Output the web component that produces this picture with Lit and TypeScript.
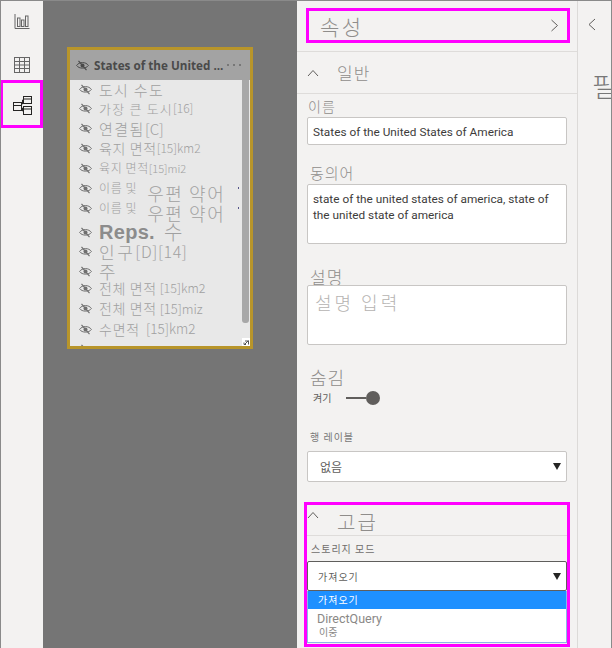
import { LitElement, html, css } from 'lit';
import { customElement } from 'lit/decorators.js';
import { styleMap } from 'lit/directives/style-map.js';

const eyeOff = html`<svg class="eye" viewBox="0 0 13 11" width="13" height="11" fill="none" stroke="currentColor">
  <path d="M.6 5.5 C3 1.6 10 1.6 12.4 5.5 C10 9 3 9 .6 5.5Z" stroke-width="1"/>
  <circle cx="6.5" cy="5.5" r="2" fill="currentColor" stroke="none"/>
  <path d="M2.5 .8 L10.5 10.2" stroke-width="1.2"/>
</svg>`;

type Field = {
  name: string;
  tail?: string;
  size: number;
  tailSize?: number;
  ls?: number;
  tailLs?: number;
  tailGap?: number;
  tailDrop?: number;
  dy?: number;
  bold?: boolean;
  dot?: boolean;
};

// row pitch in the list is uneven, dy is the offset from the plain 20px pitch
const fields: Field[] = [
  { name: '도시 수도', size: 15, ls: 1.3, dy: -1 },
  { name: '가장 큰 도시', tail: '[16]', size: 13, tailSize: 12, ls: 1.2, dy: -1 },
  { name: '연결됨', tail: '[C]', size: 15, tailSize: 15, ls: 1.5 },
  { name: '육지 면적', tail: '[15]km2', size: 14, tailSize: 12, ls: 0.6 },
  { name: '육지 면적', tail: '[15]mi2', size: 12, tailSize: 11, ls: 0.6 },
  { name: '이름 및', tail: '우편 약어', size: 12, tailSize: 18, ls: 0.6, tailLs: 1.6, tailGap: 10, tailDrop: 10, dot: true },
  { name: '이름 및', tail: '우편 약어', size: 12, tailSize: 18, ls: 0.6, tailLs: 1.6, tailGap: 10, tailDrop: 10, dot: true },
  { name: 'Reps.', tail: '수', size: 20, tailSize: 20, ls: 0.3, tailGap: 9, dy: 4, bold: true },
  { name: '인구', tail: '[D][14]', size: 17, tailSize: 16, ls: 2.5, tailLs: 0.6, dy: -1 },
  { name: '주', size: 18 },
  { name: '전체 면적', tail: '[15]km2', size: 14, tailSize: 12.5, ls: 0.6, tailGap: 3, dy: -3 },
  { name: '전체 면적', tail: '[15]miz', size: 14, tailSize: 13, ls: 0.6, tailGap: 3 },
  { name: '수면적', tail: '[15]km2', size: 14, tailSize: 13.5, ls: 0.8, tailGap: 6, dy: 1 },
  { name: '', size: 14 },
];

@customElement('app-root')
export class AppRoot extends LitElement {
  static styles = css`
    :host {
      display: block;
      width: 612px;
      height: 648px;
      font-family: 'Noto Sans CJK KR', 'Liberation Sans', sans-serif;
      font-weight: 300;
      color: #8f8d8b;
      overflow: hidden;
    }
    .app {
      display: flex;
      height: 648px;
      box-sizing: border-box;
      border-top: 1px solid #8a8a8a;
      border-left: 1px solid #8a8a8a;
      border-right: 1px solid #8a8a8a;
      background: #f3f2f1;
    }
    .rail {
      width: 42px;
      flex: none;
      display: flex;
      flex-direction: column;
    }
    .rail-item {
      display: flex;
      align-items: center;
      justify-content: center;
      box-sizing: border-box;
      color: #666;
    }
    .rail-item.chart {
      height: 42px;
    }
    .rail-item.table {
      height: 37px;
      padding-top: 7px;
    }
    .rail-item.active {
      height: 48px;
      border: 3px solid #ff00ff;
      border-left-width: 2px;
      padding: 3px 0 0 1px;
      color: #252423;
    }
    .canvas {
      width: 254px;
      flex: none;
      box-sizing: border-box;
      background: #757575;
      padding: 46px 0 0 24px;
    }
    .card {
      width: 186px;
      height: 302px;
      box-sizing: border-box;
      border: 3px solid #b8952a;
      background: #e8e8e8;
      display: flex;
      flex-direction: column;
      position: relative;
    }
    .card-head {
      height: 30px;
      flex: none;
      box-sizing: border-box;
      background: #a3a3a3;
      display: flex;
      align-items: center;
      padding: 0 9px 0 6px;
      gap: 5px;
      color: #4a4a4a;
      font: bold 11.7px 'Open Sans', 'Liberation Sans', sans-serif;
      white-space: nowrap;
    }
    .card-head .title {
      flex: 1;
      min-width: 0;
    }
    .dots {
      display: flex;
      gap: 4px;
    }
    .dots i {
      width: 2px;
      height: 2px;
      background: #777;
    }
    .card-body {
      flex: 1;
      display: flex;
      min-height: 0;
    }
    .list {
      flex: 1;
      min-width: 0;
      padding-left: 9px;
      overflow: hidden;
      color: #9c9c9c;
    }
    .row {
      height: 20px;
      display: flex;
      align-items: center;
      white-space: nowrap;
      line-height: 1;
      color: #a0a0a0;
    }
    .row .eye {
      flex: none;
      margin-right: 7px;
      color: #6f6f6f;
    }
    .row .bold {
      font-weight: 700;
      font-family: 'Liberation Sans', sans-serif;
      color: #8c8c8c;
    }
    .row .dot {
      width: 1px;
      height: 2px;
      margin-left: 13px;
      background: #55558a;
    }
    .scroll {
      width: 7px;
      flex: none;
      margin-right: 1px;
      background: #a8a8a8;
      height: 243px;
      border-radius: 0 0 3px 3px;
    }
    .grip {
      position: absolute;
      right: 0;
      bottom: 0;
      width: 8px;
      height: 8px;
      background: #fff;
      color: #555;
    }
    .pane {
      width: 281px;
      flex: none;
      box-sizing: border-box;
      border-right: 1px solid #dcdad8;
      display: flex;
      flex-direction: column;
    }
    .pane-head {
      height: 51px;
      flex: none;
      box-sizing: border-box;
      padding-top: 7px;
      border-bottom: 1px solid #dedcda;
    }
    .hl {
      margin-left: 9px;
      width: 264px;
      height: 35px;
      box-sizing: border-box;
      border: 3px solid #ff00ff;
      display: flex;
      align-items: center;
      justify-content: space-between;
      padding: 0 8px 0 11px;
      font-size: 21px;
      letter-spacing: 2.5px;
    }
    .section {
      height: 42px;
      flex: none;
      box-sizing: border-box;
      border-bottom: 1px solid #dedcda;
      display: flex;
      align-items: center;
      gap: 18px;
      padding-left: 10px;
      font-size: 17px;
      letter-spacing: 1px;
    }
    .body {
      padding: 0 10px;
      display: flex;
      flex-direction: column;
    }
    .label {
      line-height: 1;
      padding-left: 3px;
    }
    .box {
      background: #fff;
      border: 1px solid #c8c6c4;
      border-radius: 2px;
      box-sizing: border-box;
      color: #3d3c3b;
      font: 400 11.8px/16px Roboto, 'Liberation Sans', sans-serif;
    }
    .name-label { font-size: 14px; margin-top: 5px; padding-left: 1px; letter-spacing: 1px; }
    .name-box { height: 28px; margin-top: 4px; padding: 6px 5px; }
    .syn-label { font-size: 15px; margin-top: 20px; letter-spacing: 1px; }
    .syn-box { height: 60px; margin-top: 4px; padding: 6px 5px; }
    .desc-label { font-size: 17px; margin-top: 24px; letter-spacing: 1px; }
    .desc-box { height: 60px; padding: 5px 7px; font: 300 18px/22px 'Noto Sans CJK KR', sans-serif; color: #b5b3b1; letter-spacing: 3px; }
    .hide-label { font-size: 18px; margin-top: 23px; letter-spacing: 1px; }
    .toggle {
      display: flex;
      align-items: center;
      gap: 15px;
      margin-top: 4px;
      margin-left: 6px;
      font-size: 10px;
      font-weight: 400;
      color: #605e5c;
    }
    .switch {
      display: flex;
      align-items: center;
    }
    .track {
      width: 20px;
      height: 2px;
      background: #605e5c;
    }
    .knob {
      width: 14px;
      height: 14px;
      border-radius: 50%;
      background: #605e5c;
    }
    .row-label { font-size: 10px; margin-top: 27px; color: #777; font-weight: 400; letter-spacing: 1px; }
    .select {
      height: 31px;
      margin-top: 9px;
      display: flex;
      align-items: center;
      justify-content: space-between;
      padding: 0 5px 0 12px;
      font: 400 12px 'Noto Sans CJK KR', sans-serif;
      color: #605e5c;
    }
    .caret {
      width: 0;
      height: 0;
      border-left: 4px solid transparent;
      border-right: 4px solid transparent;
      border-top: 7px solid #252423;
    }
    .advanced {
      margin: 20px 0 1px 7px;
      width: 266px;
      flex: 1;
      box-sizing: border-box;
      border: 3px solid #ff00ff;
      display: flex;
      flex-direction: column;
      position: relative;
    }
    .adv-head {
      height: 31px;
      flex: none;
      box-sizing: border-box;
      border-bottom: 1px solid #dedcda;
      display: flex;
      align-items: center;
      gap: 18px;
      font-size: 20px;
      letter-spacing: 2px;
      padding-top: 2px;
      position: relative;
    }
    .adv-head svg {
      margin-top: -12px;
    }
    .adv-head::after {
      content: '';
      position: absolute;
      left: -10px;
      right: -10px;
      bottom: -1px;
      height: 1px;
      background: #dedcda;
      z-index: -1;
    }
    .storage { font-size: 10px; font-weight: 400; margin: 8px 0 0 4px; color: #6f6d6b; letter-spacing: 1px; line-height: 1; }
    .open-select {
      margin-top: 7px;
      height: 30px;
      background: #fff;
      border: 1px solid #605e5c;
      border-radius: 2px;
      box-sizing: border-box;
      display: flex;
      align-items: center;
      justify-content: space-between;
      padding: 0 5px 0 10px;
      font-size: 10px;
      font-weight: 400;
      color: #605e5c;
      letter-spacing: 1px;
    }
    .options {
      background: #fff;
      border: 1px solid #8ab8e6;
      border-top: none;
      font-size: 10px;
      font-weight: 400;
    }
    .opt-on {
      background: #1e90ff;
      color: #fff;
      height: 18px;
      line-height: 18px;
      padding-left: 10px;
      letter-spacing: 1px;
    }
    .opt {
      padding: 2px 0 0 9px;
      box-sizing: border-box;
      height: 33px;
      color: #8a8886;
      font: 400 12.5px/15px Roboto, 'Liberation Sans', sans-serif;
    }
    .opt small {
      display: block;
      font: 400 10px/11px 'Noto Sans CJK KR', sans-serif;
      padding-left: 2px;
    }
    .side {
      flex: 1;
      min-width: 0;
      display: flex;
      flex-direction: column;
      padding: 17px 0 0 10px;
      overflow: hidden;
    }
    .side .word {
      align-self: flex-start;
      white-space: nowrap;
      font-size: 27px;
      font-weight: 300;
      line-height: 1;
      margin: 41px 0 0 4px;
      color: #777;
    }
  `;

  private chevUp() {
    return html`<svg width="12" height="8" viewBox="0 0 12 8" fill="none"><path d="M1 7 L6 1.5 L11 7" stroke="#605e5c" stroke-width="1"/></svg>`;
  }

  private renderRow(f: Field) {
    const rowStyle = { marginTop: `${f.dy ?? 0}px` };
    return html`<div class="row" style=${styleMap(rowStyle)}>
      ${eyeOff}
      <span class=${f.bold ? 'bold' : ''} style=${styleMap({ fontSize: `${f.size}px`, letterSpacing: `${f.ls ?? 0}px` })}>${f.name}</span>
      ${f.tail
        ? html`<span style=${styleMap({
            fontSize: `${f.tailSize}px`,
            letterSpacing: `${f.tailLs ?? 0}px`,
            marginLeft: `${f.tailGap ?? 0}px`,
            marginTop: `${f.tailDrop ?? 0}px`,
          })}>${f.tail}</span>`
        : null}
      ${f.dot ? html`<span class="dot"></span>` : null}
    </div>`;
  }

  render() {
    return html`<div class="app">
      <nav class="rail">
        <div class="rail-item chart">
          <svg width="16" height="16" viewBox="0 0 16 16" fill="none" stroke="currentColor"><path d="M1 0V14.5H15.5"/><rect x="3.5" y="4" width="2.5" height="8.5"/><rect x="7.5" y="6" width="2.5" height="6.5"/><rect x="11.5" y="2" width="2.5" height="10.5"/></svg>
        </div>
        <div class="rail-item table">
          <svg width="16" height="16" viewBox="0 0 16 16" fill="none" stroke="currentColor"><rect x=".5" y=".5" width="15" height="15"/><path d="M.5 4.5H15.5M.5 8H15.5M.5 11.5H15.5M5.5 .5V15.5M10.5 .5V15.5"/></svg>
        </div>
        <div class="rail-item active">
          <svg width="19" height="19" viewBox="0 0 19 19" fill="none" stroke="currentColor"><rect x=".5" y="6.5" width="8" height="8"/><path d="M.5 9.5H8.5"/><rect x="10.5" y=".5" width="8" height="7"/><path d="M10.5 3H18.5"/><rect x="10.5" y="10.5" width="8" height="8"/><path d="M10.5 13H18.5"/><path d="M8.5 8H9.5V4H10.5M8.5 12H9.5V15H10.5"/></svg>
        </div>
      </nav>
      <main class="canvas">
        <section class="card">
          <header class="card-head">
            ${eyeOff}
            <span class="title">States of the United ...</span>
            <span class="dots"><i></i><i></i><i></i></span>
          </header>
          <div class="card-body">
            <div class="list">${fields.map((f) => this.renderRow(f))}</div>
            <div class="scroll"></div>
          </div>
          <svg class="grip" viewBox="0 0 8 8" fill="none" stroke="currentColor"><path d="M2.5 6.5L6.5 2.5M3 3H6.5V6.5M2 4.5V6.5H4"/></svg>
        </section>
      </main>
      <aside class="pane">
        <div class="pane-head">
          <div class="hl">
            <span>속성</span>
            <svg width="9" height="13" viewBox="0 0 9 13" fill="none"><path d="M1.5 1 L7.5 6.5 L1.5 12" stroke="#605e5c" stroke-width="1"/></svg>
          </div>
        </div>
        <div class="section">${this.chevUp()}<span>일반</span></div>
        <div class="body">
          <div class="label name-label">이름</div>
          <div class="box name-box">States of the United States of America</div>
          <div class="label syn-label">동의어</div>
          <div class="box syn-box">state of the united states of america, state of the united state of america</div>
          <div class="label desc-label">설명</div>
          <div class="box desc-box">설명 입력</div>
          <div class="label hide-label">숨김</div>
          <div class="toggle"><span>켜기</span><span class="switch"><span class="track"></span><span class="knob"></span></span></div>
          <div class="label row-label">행 레이블</div>
          <div class="box select"><span>없음</span><span class="caret"></span></div>
        </div>
        <div class="advanced">
          <div class="adv-head">${this.chevUp()}<span>고급</span></div>
          <div class="storage">스토리지 모드</div>
          <div class="open-select"><span>가져오기</span><span class="caret"></span></div>
          <div class="options">
            <div class="opt-on">가져오기</div>
            <div class="opt">DirectQuery<small>이중</small></div>
          </div>
        </div>
      </aside>
      <aside class="side">
        <svg width="8" height="13" viewBox="0 0 8 13" fill="none"><path d="M7 1 L1 6.5 L7 12" stroke="#605e5c" stroke-width="1"/></svg>
        <div class="word">필</div>
      </aside>
    </div>`;
  }
}
